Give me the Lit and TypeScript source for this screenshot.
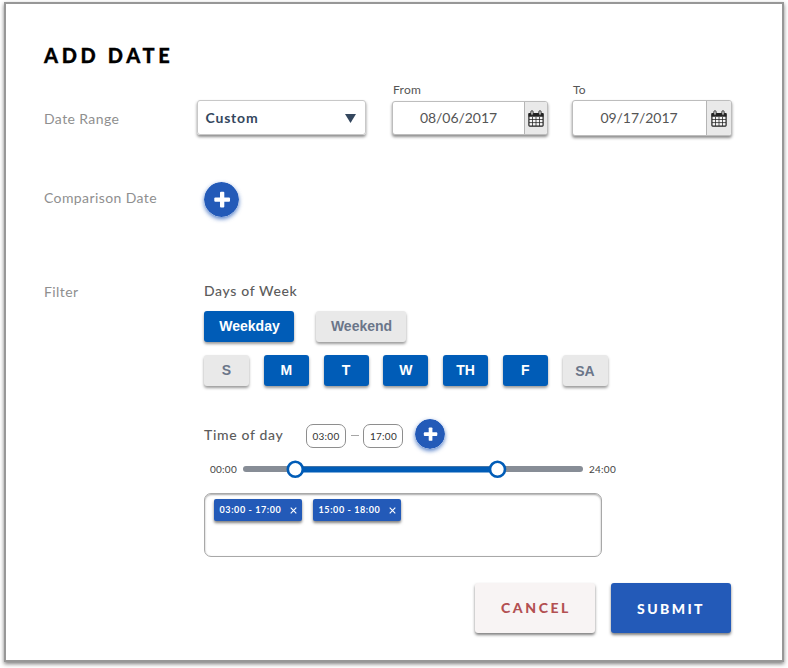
import { LitElement, html, css, svg } from "lit";
import { customElement, property } from "lit/decorators.js";
import { classMap } from "lit/directives/class-map.js";

const calendar = html`<svg class="cal" width="16" height="17" viewBox="0 0 16 17">
  ${svg`
  <rect x="0.9" y="3.5" width="14.2" height="12.6" rx="0.8" fill="#f5f5f5" stroke="#222" stroke-width="1.2"/>
  <path d="M0.6 3.2h14.8v3.6H0.6z" fill="#222"/>
  <path d="M1 9.5h14M1 12.6h14M4.5 7v9M8 7v9M11.5 7v9" stroke="#222" stroke-width="0.75"/>
  <rect x="2.9" y="0.7" width="2.2" height="4.6" rx="1.1" fill="#e9e9e9" stroke="#222" stroke-width="0.9"/>
  <rect x="10.9" y="0.7" width="2.2" height="4.6" rx="1.1" fill="#e9e9e9" stroke="#222" stroke-width="0.9"/>`}
</svg>`;

@customElement("plus-button")
export class PlusButton extends LitElement {
  @property({ type: Number }) size = 35;
  static styles = css`
    :host { display: block; line-height: 0; }
    svg { border-radius: 50%; box-shadow: 0 2px 4px rgba(35, 90, 184, 0.75); }
  `;
  render() {
    return html`<svg width=${this.size} height=${this.size} viewBox="0 0 35 35">
      <circle cx="17.5" cy="17.5" r="17.5" fill="#235ab8" />
      <rect x="16" y="9.8" width="4.3" height="15.6" rx="1" fill="#fff" />
      <rect x="10.3" y="15.5" width="15.7" height="4.3" rx="1" fill="#fff" />
    </svg>`;
  }
}

@customElement("app-root")
export class AppRoot extends LitElement {
  private days: [string, boolean][] = [
    ["S", false], ["M", true], ["T", true], ["W", true], ["TH", true], ["F", true], ["SA", false],
  ];
  private ranges = ["03:00 - 17:00", "15:00 - 18:00"];

  static styles = css`
    :host {
      display: flow-root;
      height: 668px;
      overflow: hidden;
      background: #fff;
      font-family: Lato, "Liberation Sans", sans-serif;
      color: #555;
    }
    * { box-sizing: border-box; }
    .panel {
      width: 780px; height: 660px; margin: 2px 4px;
      border: 2px solid #979797; background: #fff;
      box-shadow: 0 2px 4px rgba(0, 0, 0, 0.5);
      padding: 36px 51px 0 38px;
      display: flex; flex-direction: column;
    }
    h1 {
      margin: 0; height: 30px; line-height: 30px; color: #000;
      font-size: 20px; font-weight: 900; letter-spacing: 3.65px;
      -webkit-text-stroke: 0.3px #000;
    }
    .row { display: grid; grid-template-columns: 160px 1fr; }
    .label { color: #8f8f8f; font-size: 14px; line-height: 20px; letter-spacing: 0.4px; }
    .dates { height: 66px; margin-top: 10px; grid-template-columns: 153px 1fr; }
    .dates .label { padding-top: 29px; }
    .fields { display: flex; align-items: flex-start; }
    .select {
      width: 169px; height: 35px; margin-top: 20px; padding: 0 9px 0 7.5px;
      display: flex; align-items: center; justify-content: space-between;
      border: 1px solid #c8c8c8; border-radius: 3px;
      box-shadow: 0 2px 3px rgba(0, 0, 0, 0.45);
      color: #34475e; font-size: 14px; font-weight: 700; letter-spacing: 0.8px;
    }
    .select svg { margin-top: 2px; }
    .field { margin-left: 26px; }
    .field + .field { margin-left: 24px; }
    .caption { font-size: 12px; line-height: 20px; letter-spacing: 0.25px; padding-left: 1px; }
    .date {
      display: flex; height: 34px; width: 156px; margin-top: 1px; overflow: hidden;
      border: 1px solid #bdbdbd; border-radius: 3px; background: #fff;
      box-shadow: 0 2px 3px rgba(0, 0, 0, 0.45);
    }
    .date.large { width: 160px; height: 36px; margin-top: 0; }
    .value { flex: 1; text-align: center; line-height: 31px; font-size: 14px; letter-spacing: -0.05px; }
    .large .value { line-height: 33px; padding-right: 1px; }
    .icon {
      width: 23px; background: #e9e9e9; border-left: 1px solid #b5b5b5;
      display: flex; align-items: center; justify-content: center;
    }
    .large .icon { width: 25px; }
    .compare { margin-top: 36px; height: 36px; }
    .compare .label { padding-top: 6px; }
    .compare plus-button { margin-left: -0.5px; margin-top: -0.5px; }
    .filter { margin-top: 64px; }
    .sub { font-size: 14px; line-height: 20px; letter-spacing: 0.65px; color: #5c5c5c; font-weight: 500; }
    .days { line-height: 18px; padding-bottom: 2px; }
    .buttons { display: flex; }
    .tag {
      height: 31px; border-radius: 3px; background: #e9e9e9; color: #6b7689;
      font: 700 14px/30px "Liberation Sans", sans-serif; text-align: center;
      box-shadow: 0 2px 3px rgba(0, 0, 0, 0.4);
    }
    .tag.on { background: #005cb7; color: #fff; }
    .kinds { margin-top: 9px; gap: 22px; }
    .kinds .tag { width: 90px; padding-left: 1px; }
    .week { margin-top: 13px; gap: 14.75px; }
    .week .tag { width: 45px; }
    .week .tag:last-child { line-height: 32px; }
    .time { display: flex; height: 32px; align-items: center; margin-top: 32px; }
    .time .sub { width: 102px; padding-top: 1px; }
    .box {
      width: 40px; height: 24px; margin-top: 3px; border: 1px solid #8e8e8e; border-radius: 7px;
      font-size: 10px; line-height: 22px; text-align: center; color: #333; letter-spacing: 0.25px;
    }
    .box:last-of-type { padding-left: 1px; }
    .dash { width: 8px; height: 1.5px; margin: 3px 4px 0 5px; background: #a6a6a6; }
    .time plus-button { margin-left: 11.5px; margin-top: -1px; }
    .slider { display: flex; align-items: center; height: 20px; margin: 9px 0 0 6px; }
    .end { width: 33px; font-size: 10px; color: #444; letter-spacing: 0.25px; white-space: nowrap; line-height: 18px; }
    .end:last-child { padding-left: 6px; }
    .ranges {
      display: flex; align-items: flex-start; gap: 11px; margin-top: 14px; padding: 5px 9px;
      width: 398px; height: 64px; border: 1px solid #a8a8a8; border-radius: 7px;
      box-shadow: inset 0 1px 2px rgba(0, 0, 0, 0.35);
    }
    .chip {
      width: 88px; height: 22px; padding: 0 5px 1px 5.5px; border-radius: 2px; background: #235ab8; color: #fff;
      display: flex; align-items: center; justify-content: space-between;
      font-size: 9px; font-weight: 700; letter-spacing: 0.6px; white-space: nowrap;
      box-shadow: 0 2px 3px rgba(0, 0, 0, 0.5);
    }
    .chip svg { margin-top: 1px; }
    .actions { display: flex; justify-content: flex-end; gap: 16px; margin-top: 26px; }
    .action {
      width: 120px; height: 50px; border-radius: 3px; text-align: center; padding-left: 2px;
      font-size: 14px; line-height: 50px; font-weight: 900; letter-spacing: 2.6px;
      box-shadow: 0 2px 3px rgba(0, 0, 0, 0.5);
    }
    .cancel { background: #f8f4f4; color: #b35052; }
    .submit { background: #235ab8; color: #fff; line-height: 52px; letter-spacing: 2.4px; padding-left: 0; }
  `;

  private dateField(caption: string, value: string, large = false) {
    return html`<div class="field">
      <div class="caption">${caption}</div>
      <div class=${classMap({ date: true, large })}>
        <div class="value">${value}</div>
        <div class="icon">${calendar}</div>
      </div>
    </div>`;
  }

  render() {
    return html`<div class="panel">
      <h1>ADD DATE</h1>
      <div class="row dates">
        <div class="label">Date Range</div>
        <div class="fields">
          <div class="select">Custom
            <svg width="11" height="9" viewBox="0 0 11 9"><path d="M0 0h11L5.5 9z" fill="#34475e" /></svg>
          </div>
          ${this.dateField("From", "08/06/2017")} ${this.dateField("To", "09/17/2017", true)}
        </div>
      </div>
      <div class="row compare">
        <div class="label">Comparison Date</div>
        <plus-button .size=${35}></plus-button>
      </div>
      <div class="row filter">
        <div class="label">Filter</div>
        <div>
          <div class="sub days">Days of Week</div>
          <div class="buttons kinds"><div class="tag on">Weekday</div><div class="tag">Weekend</div></div>
          <div class="buttons week">
            ${this.days.map(([name, on]) => html`<div class=${classMap({ tag: true, on })}>${name}</div>`)}
          </div>
          <div class="time">
            <div class="sub">Time of day</div>
            <div class="box">03:00</div><div class="dash"></div><div class="box">17:00</div>
            <plus-button .size=${30}></plus-button>
          </div>
          <div class="slider">
            <div class="end">00:00</div>
            <svg width="340" height="20" viewBox="0 0 340 20">
              <rect y="7" width="340" height="6" rx="3" fill="#878d96" />
              <rect x="52" y="7.5" width="202" height="6" fill="#005cb7" />
              <circle cx="52.3" cy="10.3" r="7.5" fill="#fff" stroke="#005cb7" stroke-width="2.6" />
              <circle cx="254.5" cy="10.3" r="7.5" fill="#fff" stroke="#005cb7" stroke-width="2.6" />
            </svg>
            <div class="end">24:00</div>
          </div>
          <div class="ranges">
            ${this.ranges.map((r) => html`<div class="chip">${r}
              <svg width="7" height="7" viewBox="0 0 7 7"><path d="M0.7 0.7l5.6 5.6M6.3 0.7L0.7 6.3" stroke="#fff" stroke-width="1.1" /></svg>
            </div>`)}
          </div>
        </div>
      </div>
      <div class="actions"><div class="action cancel">CANCEL</div><div class="action submit">SUBMIT</div></div>
    </div>`;
  }
}
